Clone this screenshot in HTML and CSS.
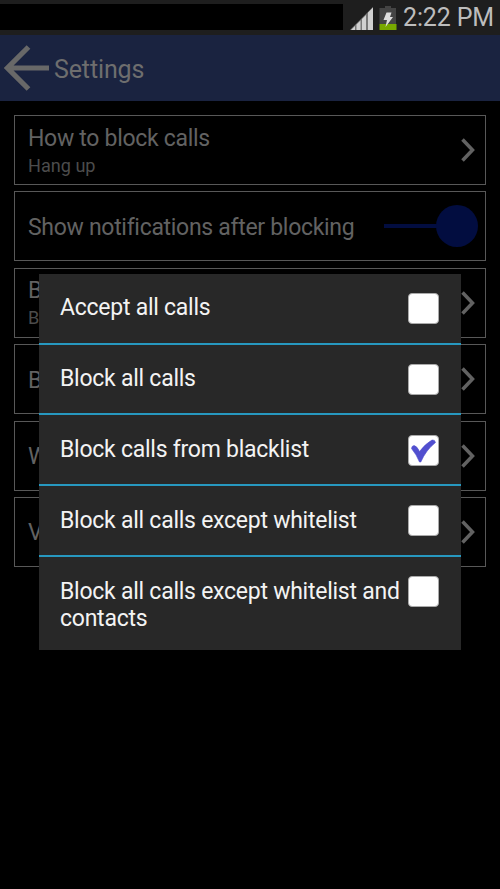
FILE: index.html
```
<!DOCTYPE html>
<html lang="en">
<head>
<meta charset="utf-8">
<title>Settings</title>
<link rel="stylesheet" href="styles.css">
</head>
<body>
<div class="screen">
  <header class="status">
    <div class="notifications"></div>
    <svg class="signal" width="24" height="24" viewBox="0 0 24 24"><path fill="#777" d="M0 23 23 0v23z"/><path fill="#d0d0d0" d="M1 23 5 19v4zM6.500 17.500l4-4V23h-4zM12 12l4-4v15h-4zM18 5.500 23 .500V23h-5z"/></svg>
    <svg class="battery" width="18" height="24" viewBox="0 0 18 24"><path fill="#444" d="M6 0h6v2h5v16H.500V2H6z"/><path fill="#78a800" d="M.500 18h17v6H.500z"/><path fill="#ddd" d="M7.500 6.500h5L11 11h3L6.500 21l1.500-7H4.500z"/></svg>
    <time class="clock">2:22 PM</time>
  </header>
  <nav class="appbar">
    <svg class="back" width="46" height="46" viewBox="0 0 46 46"><path fill="none" stroke="#686868" stroke-width="5.200" d="M24.500 2 3.500 23l21 21M3.500 23H45"/></svg>
    <h1 class="title">Settings</h1>
  </nav>
  <main class="settings">
    <section class="card"><div class="lines"><div class="name">How to block calls</div><div class="value">Hang up</div></div><svg class="chevron" width="14" height="24" viewBox="0 0 14 24"><path d="M1.500 1.500 11.500 12l-10 10.500"/></svg></section>
    <section class="card"><div class="name single">Show notifications after blocking</div><div class="toggle"><span class="track"></span><span class="thumb"></span></div></section>
    <section class="card"><div class="lines"><div class="name">B</div><div class="value">B</div></div><svg class="chevron" width="14" height="24" viewBox="0 0 14 24"><path d="M1.500 1.500 11.500 12l-10 10.500"/></svg></section>
    <section class="card"><div class="name single">B</div><svg class="chevron" width="14" height="24" viewBox="0 0 14 24"><path d="M1.500 1.500 11.500 12l-10 10.500"/></svg></section>
    <section class="card"><div class="name single">W</div><svg class="chevron" width="14" height="24" viewBox="0 0 14 24"><path d="M1.500 1.500 11.500 12l-10 10.500"/></svg></section>
    <section class="card"><div class="name single">V</div><svg class="chevron" width="14" height="24" viewBox="0 0 14 24"><path d="M1.500 1.500 11.500 12l-10 10.500"/></svg></section>
  </main>
  <div class="dialog">
    <div class="option"><span class="label">Accept all calls</span><span class="box"></span></div>
    <div class="option"><span class="label">Block all calls</span><span class="box"></span></div>
    <div class="option"><span class="label">Block calls from blacklist</span><span class="box"><svg width="32" height="32" viewBox="0 0 32 32"><path fill="#514fcf" stroke="#514fcf" stroke-width=".6" d="M3.500 13.500Q3.500 11 6 10.500 9 11 11.500 16.500 17 9 24 5 27 4.500 27.500 7.500 18 15 12.800 27H11.500Q8.500 19.500 3.500 13.500z"/></svg></span></div>
    <div class="option"><span class="label">Block all calls except whitelist</span><span class="box"></span></div>
    <div class="option tall"><span class="label">Block all calls except whitelist and<br>contacts</span><span class="box"></span></div>
  </div>
</div>
</body>
</html>
```

FILE: styles.css
```
* { box-sizing: border-box; }
body { margin: 0; background: #000; font-family: Roboto, "Liberation Sans", sans-serif; }
.screen { position: relative; width: 500px; height: 889px; overflow: hidden; background: #000; }
.status { display: flex; height: 35px; background: #1e1e1e; }
.notifications { width: 343px; height: 26px; margin-top: 4px; background: #000; }
.signal { margin: 7px 0 0 7px; }
.battery { margin: 6px 0 0 5px; }
.clock { margin-left: 6px; font-size: 25px; letter-spacing: -0.150px; line-height: 35px; color: #bdbdbd; white-space: nowrap; }
.appbar { display: flex; align-items: center; height: 66px; padding-left: 4px; background: #1a2340; }
.title { margin: 4px 0 0 4px; font-size: 25px; letter-spacing: -0.120px; font-weight: 400; line-height: 34px; color: #6e6e6e; }
.settings { display: flex; flex-direction: column; gap: 6.400px; padding: 14px 14px 0; }
.card { display: flex; align-items: center; justify-content: space-between; height: 70px; padding: 0 10px 0 13px; border: 1px solid #585858; color: #626262; }
.lines { padding-top: 2px; }
.name { padding-top: 1px; font-size: 23px; letter-spacing: -0.300px; line-height: 28px; white-space: nowrap; }
.single { padding-top: 3px; }
.value { font-size: 18.100px; line-height: 26px; color: #4c4c4c; }
.chevron { fill: none; stroke: #626262; stroke-width: 3.500; }
.toggle { display: flex; align-items: center; margin-right: -3px; }
.track { width: 53px; height: 4px; background: #020d40; }
.thumb { width: 42px; height: 42px; margin-left: -1px; border-radius: 50%; background: #020d40; }
.dialog { position: absolute; top: 273.500px; left: 39px; width: 422px; height: 376px; background: #282828; }
.option { display: flex; justify-content: space-between; align-items: flex-start; height: 70.800px; padding: 19.300px 22px 0 21px; border-bottom: 2px solid #2798c0; color: #f3f3f3; }
.option:first-child { height: 71.100px; }
.tall { height: 92px; border: 0; }
.label { margin-top: 1.500px; font-size: 23px; letter-spacing: -0.250px; line-height: 27px; white-space: nowrap; }
.box { width: 31px; height: 31px; margin-left: -20px; border: 1px solid #aaa; border-radius: 4px; background: #fff; }
.box svg { display: block; margin: -1px; }
```
